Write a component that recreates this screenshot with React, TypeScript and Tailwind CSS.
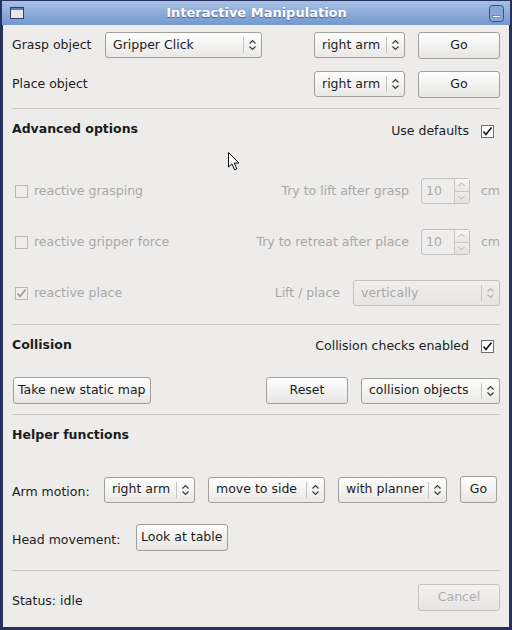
import React from "react";

const font = "font-['DejaVu_Sans','Bitstream_Vera_Sans',sans-serif]";

function Arrows({ dim }: { dim?: boolean }) {
  const c = dim ? "#b3b2b0" : "#3a3a3a";
  return (
    <svg width="9" height="12" viewBox="0 0 9 12" className="shrink-0">
      <path d="M1.5 4.5 L4.5 1.5 L7.5 4.5" fill="none" stroke={c} strokeWidth="1.2" />
      <path d="M1.5 7.5 L4.5 10.5 L7.5 7.5" fill="none" stroke={c} strokeWidth="1.2" />
    </svg>
  );
}

function Combo({ text, w, disabled }: { text: string; w: string; disabled?: boolean }) {
  return (
    <div
      className={`${w} h-[26px] shrink-0 flex items-center rounded-[3px] border pl-[7px] pr-[4px] ${
        disabled
          ? "border-[#c2c1bf] bg-gradient-to-b from-[#f0efee] to-[#e6e5e3] text-[#a9a8a6]"
          : "border-[#a09f9c] bg-gradient-to-b from-[#fefefe] to-[#e9e8e6] text-[#1c1c1c]"
      }`}
    >
      <span className="flex-1 min-w-0 whitespace-nowrap">{text}</span>
      <span className={`w-px h-[16px] ml-[3px] mr-[4px] shrink-0 ${disabled ? "bg-[#c9c8c6]" : "bg-[#c4c3c1]"}`} />
      <Arrows dim={disabled} />
    </div>
  );
}

function Button({
  text,
  w,
  disabled,
  tight,
}: {
  text: string;
  w: string;
  disabled?: boolean;
  tight?: boolean;
}) {
  return (
    <div
      className={`${w} h-[27px] shrink-0 flex items-center ${
        tight ? "justify-start px-[4px]" : "justify-center"
      } rounded-[3px] border whitespace-nowrap ${
        disabled
          ? "border-[#c4c3c1] bg-gradient-to-b from-[#f3f2f1] to-[#e6e5e3] text-[#b0afad]"
          : "border-[#a09f9c] bg-gradient-to-b from-[#fefefe] to-[#e7e6e4] text-[#1c1c1c]"
      }`}
    >
      {text}
    </div>
  );
}

function Check({ checked, disabled }: { checked?: boolean; disabled?: boolean }) {
  const c = disabled ? "#9a9997" : "#111";
  return (
    <div
      className={`w-[13px] h-[13px] shrink-0 border flex items-center justify-center ${
        disabled ? "border-[#b9b8b6] bg-[#efeeed]" : "border-[#6f6e6c] bg-white"
      }`}
    >
      {checked && (
        <svg width="11" height="11" viewBox="0 0 11 11">
          <path d="M1.5 5.5 L4 8.5 L9.5 1.5" fill="none" stroke={c} strokeWidth="1.6" />
        </svg>
      )}
    </div>
  );
}

function Spin() {
  return (
    <div className="w-[49px] h-[26px] shrink-0 flex rounded-[3px] border border-[#c2c1bf] bg-[#eeedec] text-[#aaa9a7]">
      <span className="flex-1 flex items-center pl-[4px]">10</span>
      <div className="w-[15px] flex flex-col border-l border-[#c9c8c6]">
        <div className="flex-1 flex items-center justify-center border-b border-[#c9c8c6] bg-gradient-to-b from-[#f6f5f4] to-[#e8e7e5]">
          <svg width="9" height="5" viewBox="0 0 9 5">
            <path d="M1.5 4 L4.5 1 L7.5 4" fill="none" stroke="#b0afad" strokeWidth="1" />
          </svg>
        </div>
        <div className="flex-1 flex items-center justify-center bg-gradient-to-b from-[#eeedec] to-[#e2e1df]">
          <svg width="9" height="5" viewBox="0 0 9 5">
            <path d="M1.5 1 L4.5 4 L7.5 1" fill="none" stroke="#b0afad" strokeWidth="1" />
          </svg>
        </div>
      </div>
    </div>
  );
}

function Separator({ mt }: { mt: string }) {
  return <div className={`${mt} h-px bg-[#c9c8c6] shrink-0`} />;
}

export default function App() {
  return (
    <div
      className={`${font} relative w-[512px] h-[630px] bg-[#28325f] px-[3px] pb-[3px] pt-px flex flex-col text-[12.5px] text-[#1c1c1c] overflow-hidden`}
    >
      {/* Title bar */}
      <div className="h-[24px] shrink-0 flex items-center bg-gradient-to-b from-[#a7c0e5] to-[#7598cd] px-[8px] -mx-[1px]">
        <svg width="14" height="12" viewBox="0 0 14 12" className="shrink-0">
          <rect x="0.5" y="0.5" width="13" height="11" fill="#e8e7e3" stroke="#2d3f6f" />
          <rect x="1" y="1" width="12" height="2" fill="#5c7fb8" />
        </svg>
        <div className="flex-1 text-center font-bold text-white text-[13px] [text-shadow:0_1px_1px_rgba(30,50,100,0.6)]">
          Interactive Manipulation
        </div>
        <svg width="15" height="17" viewBox="0 0 15 17" className="shrink-0 -mr-[2px]">
          <rect x="0.5" y="0.5" width="14" height="16" rx="3" fill="#88a6d6" stroke="#34508a" />
          <rect x="3.5" y="10.5" width="8" height="2" fill="#fff" stroke="#34508a" strokeWidth="0.5" />
        </svg>
      </div>

      {/* Body */}
      <div className="flex-1 bg-[#edeceb] pl-[9px] pr-[9px] flex flex-col">
        {/* Grasp / place */}
        <div className="mt-[6px] h-[28px] flex items-center">
          <span className="w-[93px] shrink-0">Grasp object</span>
          <Combo text="Gripper Click" w="w-[157px]" />
          <div className="flex-1" />
          <Combo text="right arm" w="w-[91px]" />
          <div className="w-[13px]" />
          <Button text="Go" w="w-[82px]" />
        </div>
        <div className="mt-[11px] h-[28px] flex items-center">
          <span>Place object</span>
          <div className="flex-1" />
          <Combo text="right arm" w="w-[91px]" />
          <div className="w-[13px]" />
          <Button text="Go" w="w-[82px]" />
        </div>

        <Separator mt="mt-[10px]" />

        {/* Advanced options */}
        <div className="mt-[9px] h-[26px] flex items-center">
          <span className="font-bold pb-[3px]">Advanced options</span>
          <div className="flex-1" />
          <span>Use defaults</span>
          <div className="w-[12px]" />
          <Check checked />
          <div className="w-[6px]" />
        </div>

        <div className="mt-[34px] h-[26px] flex items-center text-[#a9a8a6]">
          <div className="w-[3px]" />
          <Check disabled />
          <span className="ml-[6px]">reactive grasping</span>
          <div className="flex-1" />
          <span>Try to lift after grasp</span>
          <div className="w-[12px]" />
          <Spin />
          <div className="w-[11px]" />
          <span>cm</span>
        </div>
        <div className="mt-[25px] h-[26px] flex items-center text-[#a9a8a6]">
          <div className="w-[3px]" />
          <Check disabled />
          <span className="ml-[6px]">reactive gripper force</span>
          <div className="flex-1" />
          <span>Try to retreat after place</span>
          <div className="w-[12px]" />
          <Spin />
          <div className="w-[11px]" />
          <span>cm</span>
        </div>
        <div className="mt-[25px] h-[26px] flex items-center text-[#a9a8a6]">
          <div className="w-[3px]" />
          <Check checked disabled />
          <span className="ml-[6px]">reactive place</span>
          <div className="flex-1" />
          <span>Lift / place</span>
          <div className="w-[13px]" />
          <Combo text="vertically" w="w-[147px]" disabled />
        </div>

        <Separator mt="mt-[18px]" />

        {/* Collision */}
        <div className="mt-[8px] h-[26px] flex items-center">
          <span className="font-bold pb-[2px]">Collision</span>
          <div className="flex-1" />
          <span>Collision checks enabled</span>
          <div className="w-[12px]" />
          <Check checked />
          <div className="w-[6px]" />
        </div>
        <div className="mt-[18px] h-[27px] flex items-center">
          <div className="w-px" />
          <Button text="Take new static map" w="w-[138px]" tight />
          <div className="flex-1" />
          <Button text="Reset" w="w-[82px]" />
          <div className="w-[13px]" />
          <Combo text="collision objects" w="w-[139px]" />
        </div>

        <Separator mt="mt-[10px]" />

        {/* Helper functions */}
        <div className="mt-[8px] h-[24px] flex items-center">
          <span className="font-bold">Helper functions</span>
        </div>
        <div className="mt-[29px] h-[27px] flex items-center">
          <span className="w-[92px] shrink-0 pt-[5px]">Arm motion:</span>
          <Combo text="right arm" w="w-[91px]" />
          <div className="w-[13px]" />
          <Combo text="move to side" w="w-[117px]" />
          <div className="w-[13px]" />
          <Combo text="with planner" w="w-[109px]" />
          <div className="w-[13px]" />
          <Button text="Go" w="w-[37px]" />
        </div>
        <div className="mt-[21px] h-[27px] flex items-center">
          <span className="w-[124px] shrink-0 pt-[6px]">Head movement:</span>
          <Button text="Look at table" w="w-[92px]" tight />
        </div>

        <Separator mt="mt-[19px]" />

        {/* Status */}
        <div className="mt-[13px] h-[27px] flex items-center">
          <span className="pt-[7px]">Status: idle</span>
          <div className="flex-1" />
          <Button text="Cancel" w="w-[82px]" disabled />
        </div>
      </div>

      {/* Mouse pointer */}
      <svg
        width="14"
        height="20"
        viewBox="0 0 14 20"
        className="absolute left-[228px] top-[152px] pointer-events-none"
      >
        <path
          d="M0.5 0.5 L0.5 15 L4 11.8 L6.6 17.8 L8.8 16.8 L6.3 11 L11 11 Z"
          fill="#fff"
          stroke="#000"
          strokeWidth="1"
          strokeLinejoin="round"
        />
      </svg>
    </div>
  );
}
